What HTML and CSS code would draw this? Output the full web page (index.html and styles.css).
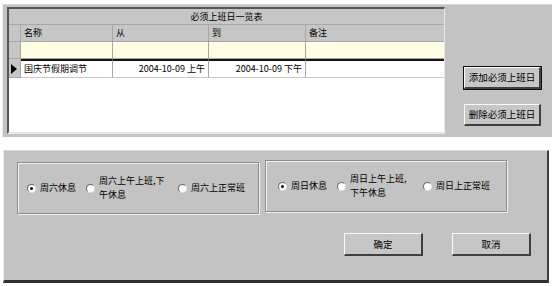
FILE: index.html
```html
<!DOCTYPE html>
<html>
<head>
<meta charset="utf-8">
<link rel="stylesheet" href="styles.css">
</head>
<body>
<div class="top-panel">
  <div class="grid">
    <div class="title-row">必须上班日一览表</div>
    <div class="row header">
      <div class="ind"></div>
      <div class="cell">名称</div>
      <div class="cell">从</div>
      <div class="cell">到</div>
      <div class="cell last">备注</div>
    </div>
    <div class="row new-row">
      <div class="ind"></div>
      <div class="cell"></div>
      <div class="cell"></div>
      <div class="cell"></div>
      <div class="cell last"></div>
    </div>
    <div class="row data">
      <div class="ind"><span class="arrow"></span></div>
      <div class="cell">国庆节假期调节</div>
      <div class="cell right">2004-10-09 上午</div>
      <div class="cell right">2004-10-09 下午</div>
      <div class="cell last"></div>
    </div>
  </div>
  <div class="side-buttons">
    <div class="btn default">添加必须上班日</div>
    <div class="btn">删除必须上班日</div>
  </div>
</div>
<div class="bottom-panel">
  <div class="groups">
    <div class="group">
      <div class="opt"><span class="radio checked"></span><span class="label">周六休息</span></div>
      <div class="opt"><span class="radio"></span><span class="label"><span class="line">周六上午上班,下</span><span class="line">午休息</span></span></div>
      <div class="opt"><span class="radio"></span><span class="label">周六上正常班</span></div>
    </div>
    <div class="group g2">
      <div class="opt"><span class="radio checked"></span><span class="label">周日休息</span></div>
      <div class="opt"><span class="radio"></span><span class="label"><span class="line">周日上午上班,</span><span class="line">下午休息</span></span></div>
      <div class="opt"><span class="radio"></span><span class="label">周日上正常班</span></div>
    </div>
  </div>
  <div class="actions">
    <div class="btn wide">确定</div>
    <div class="btn wide">取消</div>
  </div>
</div>
</body>
</html>
```
FILE: styles.css
```css
* { box-sizing: border-box; }
html, body { margin: 0; padding: 0; background: #ffffff; }
body {
  width: 552px;
  height: 286px;
  overflow: hidden;
  font-family: "Noto Sans CJK SC", "Noto Sans", sans-serif;
  font-size: 9px;
  color: #000;
  padding-top: 4px;
}
.top-panel {
  margin-left: 2px;
  height: 133px;
  background: #c3c3c3;
  border-left: 1px solid #e8e8e8;
  border-top: 1px solid #d8d8d8;
  display: flex;
  padding: 2px 0 3px 4px;
}
.grid {
  width: 438px;
  height: 127px;
  background: #fff;
  border-top: 2px solid #555;
  border-left: 2px solid #555;
  border-right: 1px solid #e8e8e8;
  border-bottom: 2px solid #e8e8e8;
}
.title-row {
  height: 16px;
  background: #c6c6c6;
  text-align: center;
  line-height: 16px;
  border-bottom: 1px solid #a8a8a8;
}
.row {
  display: grid;
  grid-template-columns: 12px 92px 96px 97px 1fr;
}
.row .ind {
  background: #c6c6c6;
  border-right: 1px solid #a8a8a8;
  border-bottom: 1px solid #a8a8a8;
  position: relative;
}
.cell {
  border-right: 1px solid #a8a8a8;
  border-bottom: 1px solid #a8a8a8;
  padding: 0 3px;
  white-space: nowrap;
  overflow: hidden;
}
.cell.last { border-right: none; }
.cell.right { text-align: right; }
.header { height: 17px; line-height: 16px; }
.header .cell { background: #c6c6c6; }
.new-row { height: 17px; }
.new-row .cell { background: #fffde3; }
.data { height: 19px; line-height: 16px; }
.data .cell { border-top: 2px solid #111; background: #fff; border-bottom-color: #c8c8c8; }
.data .ind { border-top: 2px solid #c6c6c6; }
.arrow {
  position: absolute;
  left: 2px;
  top: 3px;
  width: 0;
  height: 0;
  border-top: 5px solid transparent;
  border-bottom: 5px solid transparent;
  border-left: 6px solid #000;
}
.side-buttons {
  margin-left: 19px;
  padding-top: 60px;
  display: flex;
  flex-direction: column;
  gap: 15px;
}
.btn {
  width: 77px;
  height: 22px;
  background: #c6c6c6;
  border-top: 1px solid #fafafa;
  border-left: 1px solid #fafafa;
  border-right: 2px solid #404040;
  border-bottom: 2px solid #404040;
  text-align: center;
  line-height: 19px;
  font-size: 9.5px;
}
.btn.default {
  outline: 1px solid #111;
}
.bottom-panel {
  margin: 13px 3px 0 3px;
  height: 133px;
  background: #c3c3c3;
  border-top: 1px solid #d8d8d8;
  border-left: 1px solid #e8e8e8;
  border-right: 2px solid #404040;
  border-bottom: 3px solid #303030;
  padding: 11px 0 0 13px;
}
.groups {
  display: flex;
  gap: 6px;
}
.group {
  width: 242px;
  height: 52px;
  border: 1px solid #8c8c8c;
  box-shadow: inset 1px 1px 0 #f2f2f2, 1px 1px 0 #f2f2f2;
  display: flex;
  align-items: center;
  padding-left: 9px;
}
.g2 { margin-top: -2px; padding-left: 12px; }
.opt {
  display: flex;
  align-items: center;
  line-height: 14px;
}
.opt + .opt { margin-left: 10px; }
.group .opt:nth-child(2) { width: 82px; }
.g2 .opt:nth-child(2) { width: 76px; }
.label {
  display: flex;
  flex-direction: column;
  white-space: nowrap;
}
.line {
  display: block;
  height: 14px;
  line-height: 14px;
}
.radio {
  display: inline-block;
  width: 9px;
  height: 9px;
  border-radius: 50%;
  background: #fff;
  border: 1px solid #6a6a6a;
  border-right-color: #e0e0e0;
  border-bottom-color: #e0e0e0;
  margin-right: 4px;
  position: relative;
  flex: none;
}
.radio.checked::after {
  content: "";
  position: absolute;
  left: 2px;
  top: 2px;
  width: 3px;
  height: 3px;
  border-radius: 50%;
  background: #000;
}
.actions {
  display: flex;
  justify-content: flex-end;
  gap: 29px;
  margin-top: 19px;
  padding-right: 16px;
}
.btn.wide {
  width: 79px;
  height: 23px;
  line-height: 20px;
}
```
